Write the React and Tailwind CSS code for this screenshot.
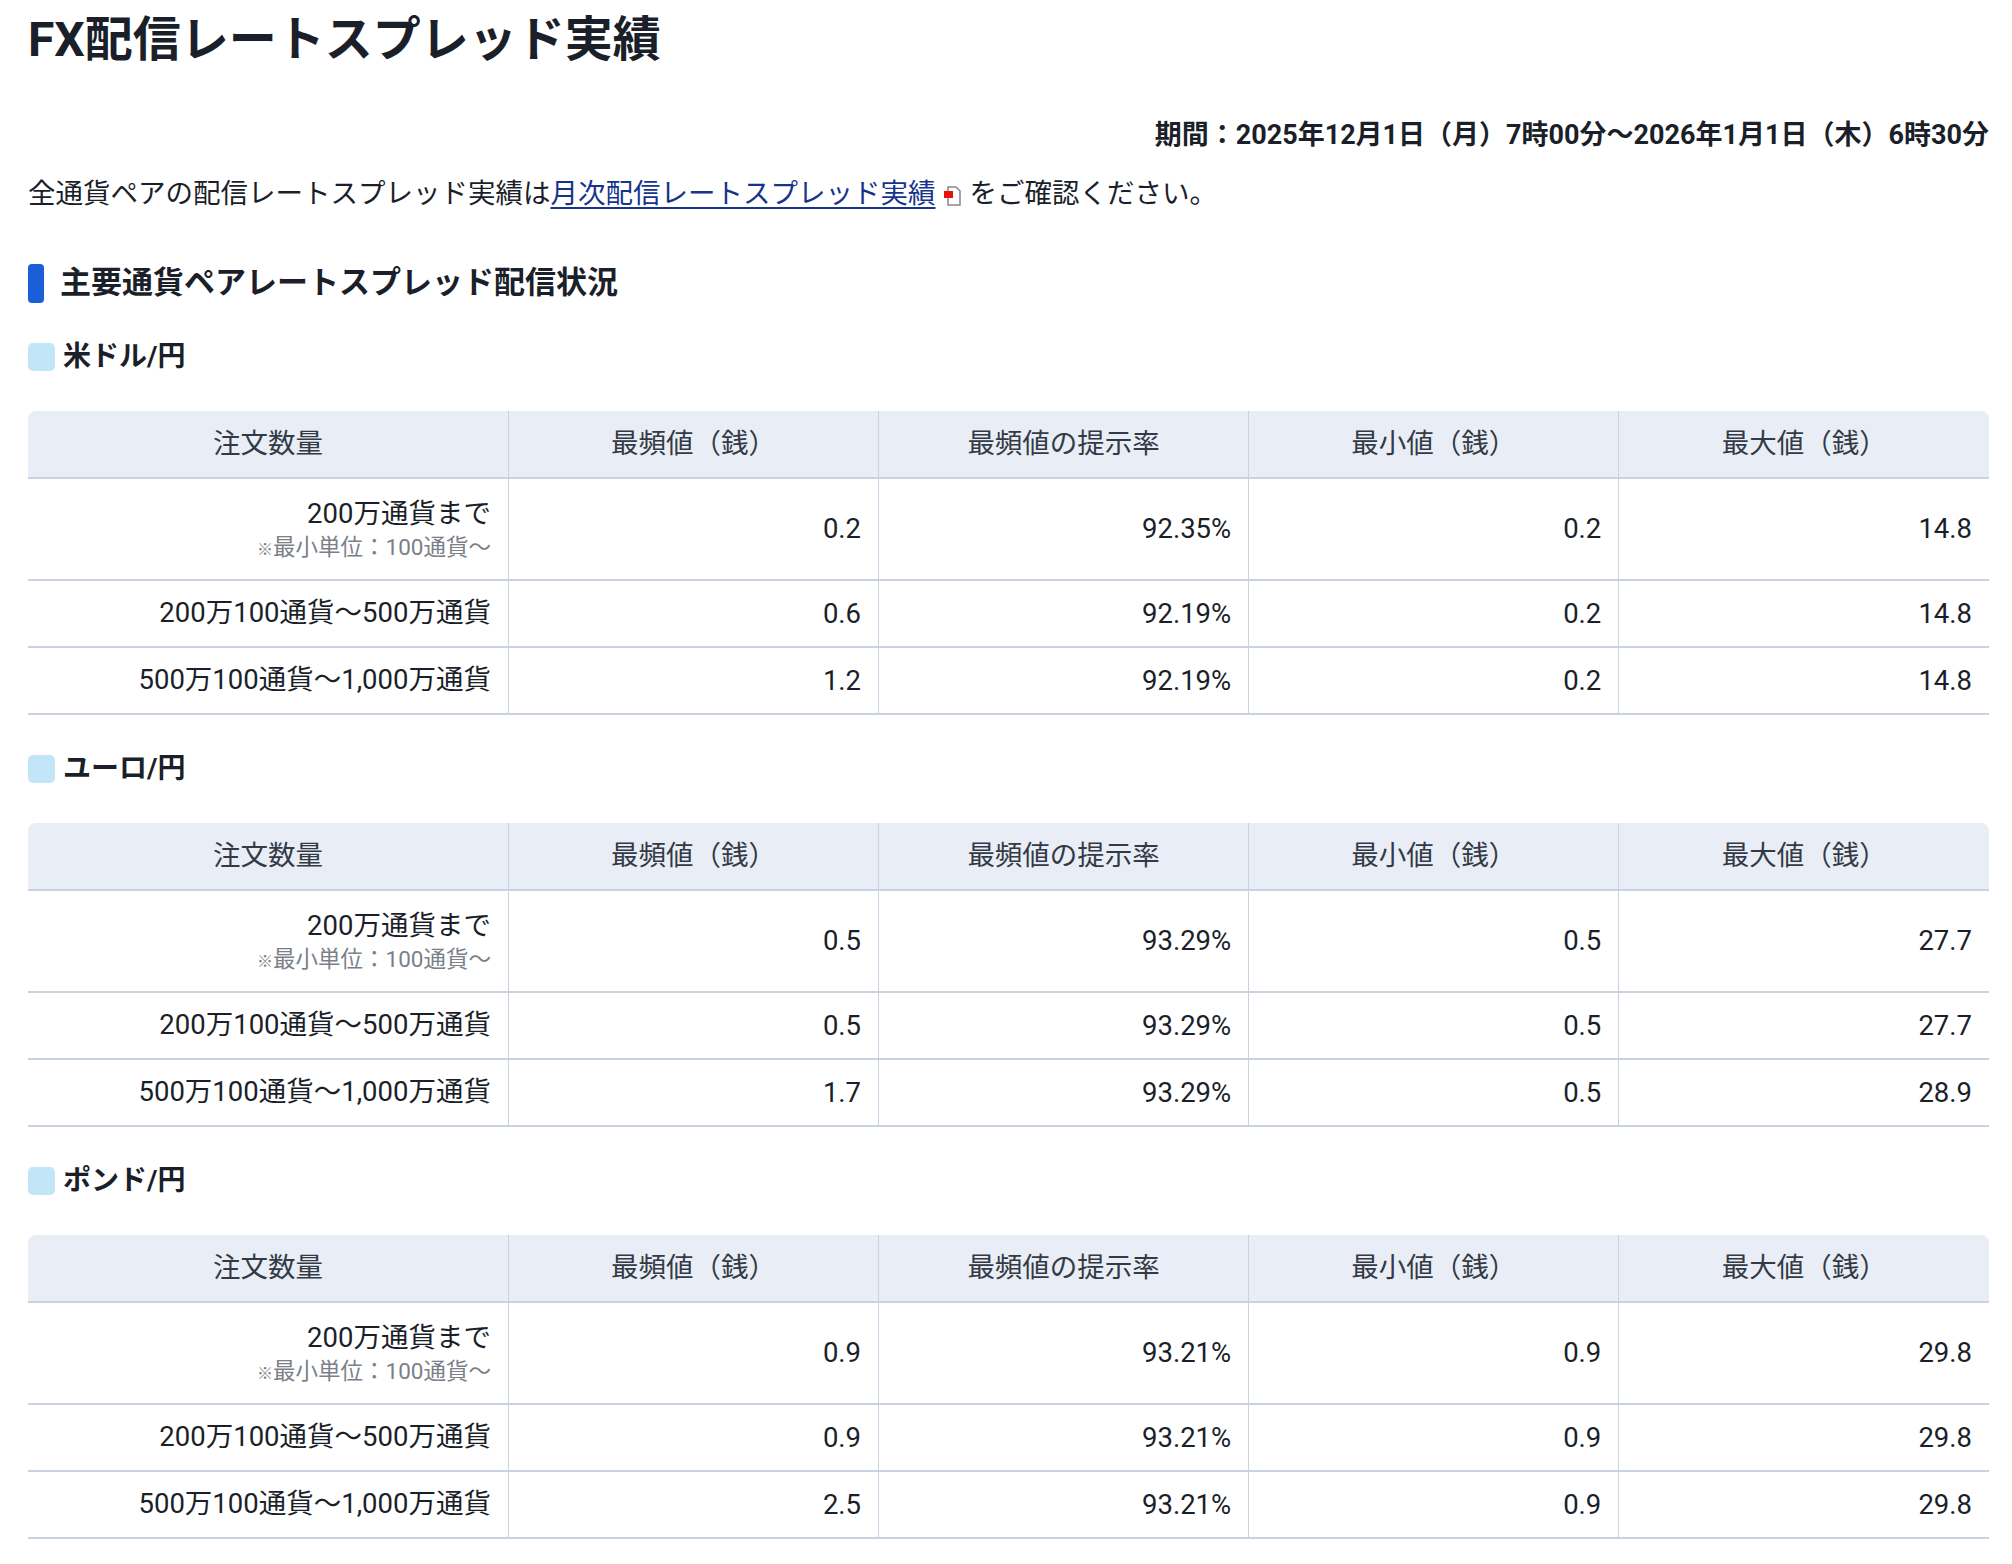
const F = { fontFamily: 'Roboto, "Noto Sans CJK JP", sans-serif' };

const tables = [
  { name: '米ドル/円', rows: [['0.2','92.35%','0.2','14.8'],['0.6','92.19%','0.2','14.8'],['1.2','92.19%','0.2','14.8']] },
  { name: 'ユーロ/円', rows: [['0.5','93.29%','0.5','27.7'],['0.5','93.29%','0.5','27.7'],['1.7','93.29%','0.5','28.9']] },
  { name: 'ポンド/円', rows: [['0.9','93.21%','0.9','29.8'],['0.9','93.21%','0.9','29.8'],['2.5','93.21%','0.9','29.8']] },
];
const heads = ['注文数量','最頻値（銭）','最頻値の提示率','最小値（銭）','最大値（銭）'];
const labels = ['200万100通貨〜500万通貨','500万100通貨〜1,000万通貨'];

function Table({ t }) {
  return (
    <div className="mt-[40px]">
      <div className="flex items-center gap-[8px] h-[28px]">
        <div className="w-[27px] h-[28px] rounded-[5px] bg-[#c2e5f8]" />
        <div className="text-[28px] font-bold text-[#1b1f2a]">{t.name}</div>
      </div>
      <table className="mt-[40px] w-full table-fixed border-collapse text-[27.5px] text-[#1b1f2a]">
        <colgroup>
          <col style={{ width: '24.5%' }} />
          <col style={{ width: '18.875%' }} />
          <col style={{ width: '18.875%' }} />
          <col style={{ width: '18.875%' }} />
          <col style={{ width: '18.875%' }} />
        </colgroup>
        <thead>
          <tr className="h-[67px] bg-[#e9eef6]">
            {heads.map((h, i) => (
              <th key={i} className={`font-normal text-[#333a45] border-b-2 border-[#c8d2e0] ${i > 0 ? 'border-l border-l-[#c8d2e0]' : 'rounded-tl-[8px]'} ${i === 4 ? 'rounded-tr-[8px]' : ''}`}>{h}</th>
            ))}
          </tr>
        </thead>
        <tbody>
          {t.rows.map((r, ri) => (
            <tr key={ri} className={ri === 0 ? 'h-[102px]' : 'h-[67px]'}>
              <td className="text-right pr-[17px] border-b-2 border-[#c8d2e0] leading-tight">
                {ri === 0 ? (
                  <>
                    <div>200万通貨まで</div>
                    <div className="text-[22.5px] text-[#7a7f88] mt-[2px]"><span className="text-[16px]">※</span>最小単位：100通貨〜</div>
                  </>
                ) : labels[ri - 1]}
              </td>
              {r.map((v, ci) => (
                <td key={ci} className="text-right pr-[17px] border-b-2 border-[#c8d2e0] border-l border-l-[#c8d2e0]">{v}</td>
              ))}
            </tr>
          ))}
        </tbody>
      </table>
    </div>
  );
}

export default function App() {
  return (
    <div style={F} className="bg-white w-[2012px] min-h-[1564px] pl-[28px] pr-[23px] text-[#1b1f2a]">
      <h1 className="text-[48px] font-bold leading-none pt-[16px]">FX配信レートスプレッド実績</h1>
      <div className="text-right text-[27px] font-bold mt-[58px] leading-none">期間：2025年12月1日（月）7時00分〜2026年1月1日（木）6時30分</div>
      <p className="text-[27.5px] mt-[30px] leading-none flex items-center">
        全通貨ペアの配信レートスプレッド実績は<span className="text-[#16348c] underline underline-offset-4">月次配信レートスプレッド実績</span>
        <svg width="22" height="26" viewBox="0 0 22 26" className="mx-[6px] mt-[4px]">
          <path d="M6 4h8l4 4v14H6z" fill="#fff" stroke="#888" strokeWidth="1.5" />
          <rect x="2" y="8" width="9" height="7" fill="#e8120c" />
        </svg>
        をご確認ください。
      </p>
      <div className="flex items-center gap-[16px] mt-[55px] h-[39px]">
        <div className="w-[16px] h-[39px] rounded-[4px] bg-[#1a5fd8]" />
        <h2 className="text-[31px] font-bold">主要通貨ペアレートスプレッド配信状況</h2>
      </div>
      {tables.map((t, i) => <Table key={i} t={t} />)}
    </div>
  );
}
